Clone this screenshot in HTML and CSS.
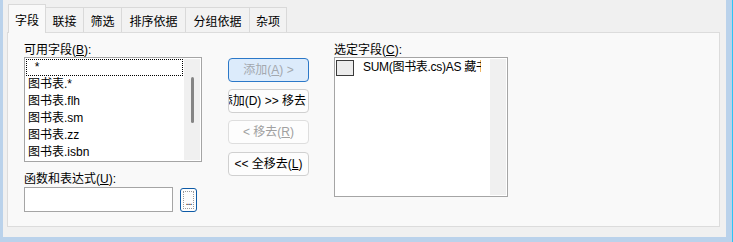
FILE: index.html
```html
<!DOCTYPE html>
<html>
<head>
<meta charset="utf-8">
<link rel="stylesheet" href="styles.css">
</head>
<body>
<div class="screen">
  <div class="window">
    <div class="tabs">
      <div class="tab tab-active">字段</div>
      <div class="tab tab-2">联接</div>
      <div class="tab tab-2">筛选</div>
      <div class="tab tab-4">排序依据</div>
      <div class="tab tab-4">分组依据</div>
      <div class="tab tab-2 tab-last">杂项</div>
    </div>
    <div class="panel">
      <div class="col-left">
        <div class="label">可用字段(<u>B</u>):</div>
        <div class="listbox lb-avail">
          <div class="items">
            <div class="item item-focus">  *</div>
            <div class="item">图书表.*</div>
            <div class="item">图书表.flh</div>
            <div class="item">图书表.sm</div>
            <div class="item">图书表.zz</div>
            <div class="item">图书表.isbn</div>
          </div>
          <div class="vscroll"><div class="thumb"></div></div>
        </div>
        <div class="label label-expr">函数和表达式(<u>U</u>):</div>
        <div class="expr-row">
          <div class="textbox"></div>
          <div class="btn-dots"><div class="dots-focus">...</div></div>
        </div>
      </div>
      <div class="col-mid">
        <div class="btn btn-focus">添加(<u>A</u>) &gt;</div>
        <div class="btn btn-clip"><span>添加(D) &gt;&gt; 移去</span></div>
        <div class="btn btn-disabled">&lt; 移去(<u>R</u>)</div>
        <div class="btn btn-last">&lt;&lt; 全移去(<u>L</u>)</div>
      </div>
      <div class="col-right">
        <div class="label">选定字段(<u>C</u>):</div>
        <div class="listbox lb-sel">
          <div class="items items-sel">
            <div class="sel-row">
              <div class="chk"></div>
              <div class="sel-text">SUM(图书表.cs)AS 藏书量</div>
            </div>
          </div>
          <div class="vscroll"></div>
        </div>
      </div>
    </div>
  </div>
</div>
</body>
</html>
```
FILE: styles.css
```css
html, body {
  margin: 0;
  padding: 0;
}
body {
  width: 733px;
  height: 242px;
  overflow: hidden;
  background: #b9d1ea;
  font-family: "Liberation Sans", "Noto Sans CJK SC", sans-serif;
  font-size: 12px;
  color: #000;
}
.screen {
  width: 732px;
  height: 242px;
  border-right: 1px solid #2cc4f4;
  background: #bad2eb;
}
.window {
  margin-left: 3px;
  width: 723px;
  height: 237px;
  background: #f0f0f0;
  box-sizing: border-box;
}
u {
  text-decoration: underline;
  text-underline-offset: 1px;
}
/* tabs */
.tabs {
  display: flex;
  align-items: flex-end;
  height: 32px;
  padding-left: 5px;
  box-sizing: border-box;
}
.tab {
  box-sizing: border-box;
  height: 25px;
  border: 1px solid #d9d9d9;
  border-bottom: none;
  background: #f2f2f2;
  text-align: center;
  line-height: 14px;
  padding-top: 7px;
  margin-left: -1px;
  white-space: nowrap;
}
.tab-active {
  width: 38px;
  height: 29px;
  margin-left: 0;
  margin-bottom: -1px;
  padding-top: 9px;
  background: #f9f9f9;
  z-index: 1;
}
.tab-2 { width: 39px; }
.tab-4 { width: 65px; }
.tab-last { width: 38px; }
/* panel */
.panel {
  margin-left: 4px;
  width: 713px;
  height: 195px;
  box-sizing: border-box;
  border: 1px solid #dcdcdc;
  background: #f9f9f9;
  display: flex;
  align-items: flex-start;
  padding: 11px 0 0 16px;
}
.label {
  height: 13px;
  line-height: 13px;
  white-space: nowrap;
}
.col-left {
  width: 178px;
  display: flex;
  flex-direction: column;
}
.listbox {
  box-sizing: border-box;
  border: 1px solid #a5a5a5;
  background: #fff;
  display: flex;
}
.lb-avail {
  width: 178px;
  height: 105px;
}
.items {
  flex: 1;
  overflow: hidden;
  padding: 1px 1px 0 1px;
}
.vscroll {
  width: 16px;
  margin: 1px 1px 1px 0;
  background: #f0f0f0;
  display: flex;
  flex-direction: column;
  align-items: center;
  padding-top: 18px;
  box-sizing: border-box;
}
.thumb {
  width: 3px;
  height: 46px;
  border-radius: 2px;
  background: #858585;
}
.item {
  box-sizing: border-box;
  height: 17px;
  border: 1px solid transparent;
  padding-left: 1px;
  line-height: 15px;
  white-space: pre;
}
.item-focus {
  width: 157px;
  border: 1px dotted #000;
}
.label-expr {
  margin-top: 11px;
}
.expr-row {
  display: flex;
  align-items: flex-start;
  margin-top: 1px;
}
.textbox {
  box-sizing: border-box;
  width: 149px;
  height: 25px;
  border: 1px solid #a5a5a5;
  background: #fff;
}
.btn-dots {
  box-sizing: border-box;
  width: 17px;
  height: 24px;
  margin-left: 7px;
  margin-top: 1px;
  border: 1px solid #0d5aa6;
  border-radius: 3px;
  background: #fdfdfd;
  padding: 2px;
  display: flex;
}
.dots-focus {
  flex: 1;
  border: 1px dotted #9a9a9a;
  display: flex;
  align-items: flex-end;
  justify-content: center;
  line-height: 10px;
  font-size: 11px;
  letter-spacing: -1px;
  color: #222;
  padding-bottom: 2px;
}
/* buttons */
.col-mid {
  margin-left: 26px;
  padding-top: 14px;
  display: flex;
  flex-direction: column;
  gap: 7px;
}
.btn {
  box-sizing: border-box;
  width: 81px;
  height: 24px;
  border: 1px solid #d0d0d0;
  border-radius: 4px;
  background: #fdfdfd;
  display: flex;
  align-items: center;
  justify-content: center;
  line-height: 14px;
  white-space: nowrap;
  overflow: hidden;
}
.btn-focus {
  background: #dcebfb;
  border-color: #2b78c8;
  color: #a3a8ae;
}
.btn-clip {
  justify-content: flex-end;
  padding-right: 2px;
}
.btn-disabled {
  color: #a0a0a0;
  border-color: #dedede;
}
.btn-last {
  margin-top: 1px;
}
/* right */
.col-right {
  margin-left: 25px;
  display: flex;
  flex-direction: column;
}
.lb-sel {
  width: 174px;
  height: 140px;
}
.lb-sel .vscroll {
  padding-top: 0;
}
.items-sel {
  padding: 1px 0 0 1px;
}
.sel-row {
  display: flex;
  align-items: center;
  height: 17px;
  white-space: nowrap;
}
.chk {
  box-sizing: border-box;
  flex: none;
  width: 18px;
  height: 16px;
  border: 1px solid #3a3a3a;
  background: #ececec;
}
.sel-text {
  margin-left: 9px;
  width: 118px;
  overflow: hidden;
  line-height: 15px;
  letter-spacing: -0.3px;
}
```
